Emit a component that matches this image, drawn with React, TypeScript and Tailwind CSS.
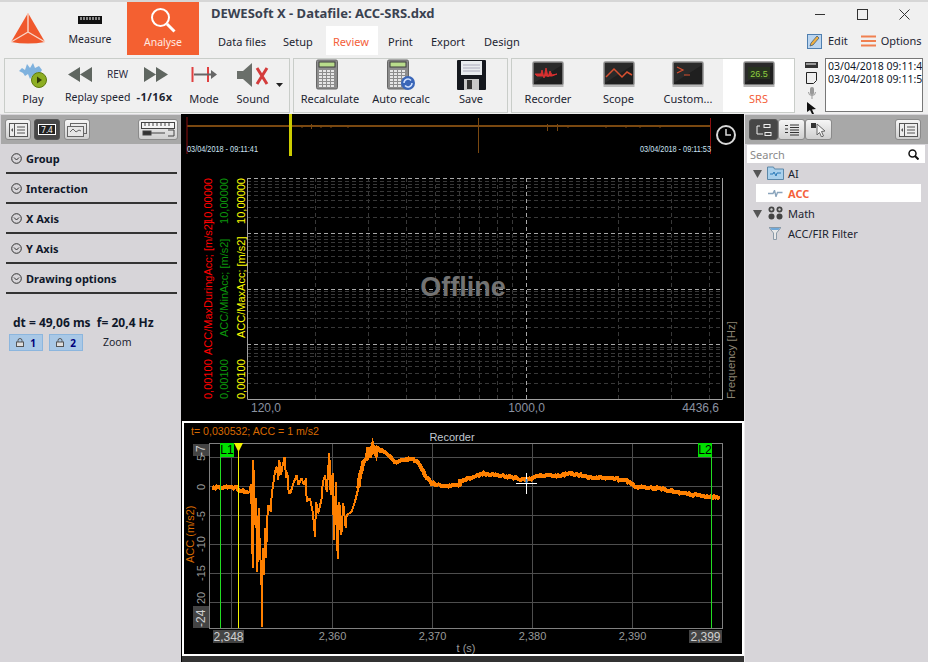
import type { ReactNode } from "react"

const ui = "font-['Noto_Sans',sans-serif]"
const arial = "'Liberation Sans', Arial, sans-serif"

// chart helpers
const z6 = (p: number[][]) => p.map(([x, y]) => [180 + x / 3, 415 + y / 3])
const z7 = (p: number[][]) => p.map(([x, y]) => [460 + x / 3, 415 + y / 3])
const toPts = (p: number[][]) => p.map(([x, y]) => `${x.toFixed(1)},${y.toFixed(1)}`).join(" ")

// adds some noise to a smooth trace so it looks like a measured signal
function noisy(p: number[][], amp: number) {
  const out: number[][] = []
  let seed = 7
  for (let i = 0; i < p.length - 1; i++) {
    const [x0, y0] = p[i]
    const [x1, y1] = p[i + 1]
    const n = Math.max(1, Math.round(Math.abs(x1 - x0) / 1.5))
    for (let k = 0; k < n; k++) {
      seed = (seed * 73 + 41) % 101
      const t = k / n
      out.push([x0 + (x1 - x0) * t, y0 + (y1 - y0) * t + (seed / 101 - 0.5) * amp])
    }
  }
  return out
}

const flatStart = noisy(z6([[96, 218], [120, 217], [170, 218], [175, 228], [210, 230]]), 2)
const spikes = z6([
  [210, 230], [212, 208], [216, 300], [218, 460], [220, 135], [224, 330], [228, 250], [232, 470], [236, 280], [240, 420],
  [244, 460], [246, 636], [248, 400], [252, 480], [256, 340], [258, 430], [262, 310], [265, 270], [272, 290], [275, 240],
  [280, 205], [285, 170], [290, 155], [295, 195], [298, 135], [303, 180], [308, 150], [314, 125], [318, 190], [322, 170],
  [326, 235], [332, 232], [340, 205], [350, 180], [355, 210], [365, 190], [372, 210], [378, 190], [380, 260], [390, 250],
  [398, 290], [405, 365], [408, 260], [415, 295], [425, 250], [428, 205], [435, 180], [440, 230], [448, 115], [452, 240],
  [458, 175], [462, 375], [468, 200], [473, 432], [478, 260], [484, 360], [490, 265], [497, 340], [500, 300], [515, 290],
  [525, 260], [535, 220],
])
const smooth = noisy(
  [
    ...z6([[535, 220], [540, 180], [550, 145], [560, 130], [565, 95], [570, 125], [578, 95], [588, 120], [592, 100], [610, 110],
      [630, 125], [650, 145], [670, 135], [695, 130], [715, 145], [735, 180], [755, 205], [775, 210], [800, 212], [840, 210]]),
    ...z7([[0, 200], [30, 190], [70, 175], [130, 182], [170, 190], [200, 195], [240, 182], [290, 182], [340, 176], [380, 186],
      [450, 190], [500, 197], [530, 215], [600, 220], [650, 232], [700, 240], [750, 245], [775, 250], [782, 258]]),
  ],
  2,
)

const freqX = (f: number) => Math.round(247.3 + 303 * Math.log10(f / 120)) + 0.5
const minorF = [200, 300, 400, 500, 600, 700, 800, 900, 2000, 3000, 4000]
const decades = [399.3, 344.05, 288.8, 233.55]
const minorN = [2, 3, 4, 5, 6, 7, 8, 9]

function Bordered({ children, className }: { children: ReactNode; className: string }) {
  return <div className={`border border-[#c9cdc9] flex ${className}`}>{children}</div>
}

function Tool({ label, icon, w, active }: { label: string; icon: ReactNode; w: string; active?: boolean }) {
  return (
    <div className={`${w} flex flex-col items-center ${active ? "bg-white" : ""}`}>
      <div className="h-[31px] flex items-center justify-center">{icon}</div>
      <div className={`mt-[2px] text-[11px] leading-[14px] ${active ? "text-[#f4603a]" : "text-[#1c2430]"}`}>{label}</div>
    </div>
  )
}

function Calc({ refresh }: { refresh?: boolean }) {
  return (
    <svg width="30" height="31" viewBox="0 0 30 31">
      <rect x="1.5" y="1" width="21" height="29" rx="1.5" fill="#8d8d8d" stroke="#666" />
      <rect x="4" y="3" width="16" height="5" fill="#b9dc8c" stroke="#3c3c3c" />
      {[11, 14, 17, 20, 23, 26].map((y) =>
        [4, 8, 12, 16].map((x) => <rect key={`${x}-${y}`} x={x} y={y} width="3" height="2" fill="#e6e6e6" />),
      )}
      {refresh && (
        <g>
          <circle cx="22" cy="24" r="7" fill="#3a66b8" />
          <path d="M18 24a4 4 0 0 1 7-2.6M26 24a4 4 0 0 1-7 2.6" fill="none" stroke="#cfe0ff" strokeWidth="1.5" />
        </g>
      )}
    </svg>
  )
}

function Screen({ children, bg = "#2a2a2a" }: { children: ReactNode; bg?: string }) {
  return (
    <svg width="32" height="27" viewBox="0 0 32 27">
      <rect x="1" y="1" width="30" height="23" rx="1.5" fill={bg} stroke="#8e8e8e" strokeWidth="1.5" />
      <path d="M2 22 L30 4 V23 H2Z" fill="#111" opacity="0.45" />
      <rect x="0.5" y="24" width="31" height="2" fill="#b9b9b9" />
      {children}
    </svg>
  )
}

function PanelBtn({ children, dark, w = "w-[26px]" }: { children: ReactNode; dark?: boolean; w?: string }) {
  return (
    <div
      className={`${w} h-[21px] rounded-[3px] border flex items-center justify-center ${
        dark ? "bg-[#474747] border-[#555]" : "bg-gradient-to-b from-[#f6f6f6] to-[#cfcfcf] border-[#8a8a8a]"
      }`}
    >
      {children}
    </div>
  )
}

function ListIcon() {
  return (
    <svg width="19" height="14" viewBox="0 0 19 14" fill="none" stroke="#555">
      <rect x="0.5" y="0.5" width="18" height="13" fill="#eee" />
      <path d="M5.5 1v12M8 4h8M8 7h8M8 10h8" />
      <path d="M4 5L2 7l2 2z" fill="#555" stroke="none" />
    </svg>
  )
}

function Section({ title }: { title: string }) {
  return (
    <div className="mx-[6px] w-[171px] h-[30px] border-b-2 border-[#333] flex items-center pl-[5px] gap-[4px]">
      <svg width="11" height="11" viewBox="0 0 11 11" fill="none" stroke="#333">
        <circle cx="5.5" cy="5.5" r="4.8" />
        <path d="M3 4.5l2.5 2.5L8 4.5" />
      </svg>
      <span className="text-[11px] font-bold text-[#10182a] leading-none">{title}</span>
    </div>
  )
}

function LockBtn({ n }: { n: number }) {
  return (
    <div className="w-[34px] h-[17px] bg-[#a9c8e6] border border-[#8cb6de] flex items-center justify-center gap-[6px]">
      <svg width="8" height="9" viewBox="0 0 8 9" fill="none">
        <path d="M2 4V2.5a2 2 0 0 1 4 0V4" stroke="#555" />
        <rect x="0.5" y="4" width="7" height="4.5" fill="#ddd" stroke="#555" />
      </svg>
      <span className="text-[10px] font-bold text-[#00007a] leading-none">{n}</span>
    </div>
  )
}

function TreeRow({ icon, label, active, arrow }: { icon: ReactNode; label: string; active?: boolean; arrow?: boolean }) {
  return (
    <div className="h-[20px] flex items-center">
      <div className="w-[10px] ml-[7px] flex justify-center">
        {arrow && (
          <svg width="9" height="9" viewBox="0 0 9 9">
            <path d="M0 1h9L4.5 9z" fill="#555" />
          </svg>
        )}
      </div>
      <div className={`flex items-center h-[18px] ml-[-6px] pl-[6px] w-[165px] ${active ? "bg-white" : ""}`}>
        <div className="w-[26px] flex justify-center">{icon}</div>
        <span className={`text-[11px] leading-none ${active ? "font-bold text-[#f4603a]" : "text-[#1c2430]"}`}>{label}</span>
      </div>
    </div>
  )
}

export default function App() {
  return (
    <div className={`w-[928px] h-[662px] overflow-hidden flex flex-col bg-[#f0f0f0] ${ui}`}>
      {/* Title bar + ribbon tabs */}
      <div className="h-[57px] border-t-2 border-[#d6d6d6] flex">
        <div className="w-[58px] flex items-start justify-center pt-[10px] pr-[2px]">
          <svg width="36" height="32" viewBox="0 0 36 32">
            <path d="M18 1 L35 30 Q18 33 1 30Z" fill="#f0582c" />
            <path d="M18 1 L18 20 M18 20 L1 30 M18 20 L35 30" stroke="#f9d6c8" strokeWidth="1.4" fill="none" />
          </svg>
        </div>
        <div className="w-[64px] flex flex-col items-center pt-[14px]">
          <svg width="24" height="8" viewBox="0 0 24 8">
            <rect width="24" height="8" fill="#111" />
            <path d="M3 1v3M6 1v3M9 1v3M12 1v3M15 1v3M18 1v3M21 1v3" stroke="#fff" />
          </svg>
          <div className="text-[10.5px] leading-[14px] mt-[8px] text-[#1c2430]">Measure</div>
        </div>
        <div className="ml-[5px] w-[72px] h-[53px] bg-[#f46031] flex flex-col items-center pt-[5px]">
          <svg width="26" height="26" viewBox="0 0 26 26" fill="none" stroke="#fff" strokeWidth="2">
            <circle cx="10.5" cy="10.5" r="8.5" />
            <path d="M17 17l7.5 7.5" strokeWidth="3" />
          </svg>
          <div className="text-[10.5px] leading-[14px] mt-[2px] text-[#ffe9e0]">Analyse</div>
        </div>
        <div className="ml-[12px] flex flex-col">
          <div className="h-[22px] text-[13px] font-bold text-[#3a4250] leading-[22px]">DEWESoft X - Datafile: ACC-SRS.dxd</div>
          <div className="flex text-[11px] text-[#1c2430] h-[29px] mt-[2px] leading-[32px]">
            <div className="w-[65px] pl-[7px]">Data files</div>
            <div className="w-[50px] pl-[7px]">Setup</div>
            <div className="w-[52px] pl-[7px] bg-white text-[#f4603a]">Review</div>
            <div className="w-[46px] pl-[10px]">Print</div>
            <div className="w-[60px] pl-[7px]">Export</div>
            <div>Design</div>
          </div>
        </div>
        <div className="ml-auto flex flex-col w-[121px]">
          <div className="h-[26px] flex items-start pt-[7px] pl-[8px] gap-[31px]">
            <svg width="11" height="11" viewBox="0 0 11 11" fill="none" stroke="#333"><path d="M0 5.5h10" /></svg>
            <svg width="11" height="11" viewBox="0 0 11 11" fill="none" stroke="#333"><rect x="0.5" y="0.5" width="10" height="10" /></svg>
            <svg width="11" height="11" viewBox="0 0 11 11" fill="none" stroke="#333"><path d="M0.5 0.5l10 10M10.5 0.5l-10 10" /></svg>
          </div>
          <div className="h-[20px] mt-[3px] flex items-center text-[11px] text-[#1c2430]">
            <svg width="15" height="15" viewBox="0 0 15 15" className="shrink-0">
              <rect x="0.5" y="0.5" width="14" height="14" fill="#bcd6f0" stroke="#4f7fb0" />
              <path d="M3 12l1-3 6-7 2 2-6 7z" fill="#f0b040" stroke="#35506e" strokeWidth="0.7" />
            </svg>
            <span className="ml-[6px]">Edit</span>
            <svg width="15" height="12" viewBox="0 0 15 12" className="ml-[13px] shrink-0">
              <path d="M0 1.5h15M0 6h15M0 10.5h15" stroke="#f08050" strokeWidth="2" />
            </svg>
            <span className="ml-[5px]">Options</span>
          </div>
        </div>
      </div>

      {/* Review toolbar */}
      <div className="h-[57px] flex pl-[4px] pt-[1px]">
        <Bordered className="w-[286px] h-[55px]">
          <Tool
            w="w-[56px]"
            label="Play"
            icon={
              <svg width="30" height="28" viewBox="0 0 30 28">
                <path d="M1 10l3-3 3 2 2-6 3 4 3-5 2 5 4-2 3 4-2 3-3-1-1 5-3-2-3 4-2-5-3 2-2-3z" fill="#7fb2de" />
                <circle cx="21" cy="19" r="7.5" fill="#8dae22" stroke="#5e7a10" />
                <path d="M19 15.5l5 3.5-5 3.5z" fill="#2f3a08" />
              </svg>
            }
          />
          <div className="w-[116px] flex flex-col">
            <div className="h-[30px] flex items-center pl-[7px]">
              <svg width="24" height="15" viewBox="0 0 24 15"><path d="M12 0v15L0 7.5zM24 0v15L12 7.5z" fill="#5f6660" /></svg>
              <span className="ml-[15px] text-[10px] text-[#2a2a40] w-[37px]">REW</span>
              <svg width="24" height="15" viewBox="0 0 24 15"><path d="M0 0v15l12-7.5zM12 0v15l12-7.5z" fill="#5f6660" /></svg>
            </div>
            <div className="mt-[1px] pl-[4px] flex items-center text-[10.5px] leading-[14px] text-[#1c2430] whitespace-nowrap">
              <span>Replay speed</span>
              <span className="ml-[6px] font-bold text-[11px] tracking-[0.5px]">-1/16x</span>
            </div>
          </div>
          <Tool
            w="w-[54px]"
            label="Mode"
            icon={
              <svg width="27" height="15" viewBox="0 0 27 15">
                <path d="M1.5 0v15M17 0v15" stroke="#e04040" strokeWidth="2" />
                <path d="M3 7.5h20" stroke="#666" strokeWidth="2" />
                <path d="M20 3l6 4.5-6 4.5z" fill="#666" />
              </svg>
            }
          />
          <Tool
            w="w-[44px]"
            label="Sound"
            icon={
              <svg width="33" height="24" viewBox="0 0 33 24">
                <path d="M0 8h6l9-8v24l-9-8H0z" fill="#6a6f6a" />
                <path d="M20 5l10 16M30 5L20 21" stroke="#d43c3c" strokeWidth="3" />
              </svg>
            }
          />
          <div className="ml-[1px] mt-[24px]">
            <svg width="7" height="4" viewBox="0 0 7 4"><path d="M0 0h7L3.5 4z" fill="#222" /></svg>
          </div>
        </Bordered>
        <Bordered className="w-[215px] h-[55px] ml-[3px]">
          <Tool w="w-[72px]" label="Recalculate" icon={<Calc />} />
          <Tool w="w-[70px]" label="Auto recalc" icon={<Calc refresh />} />
          <Tool
            w="w-[70px]"
            label="Save"
            icon={
              <svg width="29" height="30" viewBox="0 0 29 30">
                <path d="M1 0h27a1 1 0 0 1 1 1v28a1 1 0 0 1-1 1H1a1 1 0 0 1-1-1V1a1 1 0 0 1 1-1z" fill="#15181e" />
                <rect x="4" y="1" width="21" height="14" fill="#e8ebee" />
                <path d="M6 5h17M6 8h17M6 11h17" stroke="#aab" />
                <rect x="7" y="19" width="15" height="11" fill="#c8c8c8" />
                <rect x="10" y="20" width="5" height="9" fill="#333" />
              </svg>
            }
          />
        </Bordered>
        <Bordered className="w-[284px] h-[55px] ml-[3px]">
          <Tool
            w="w-[72px]"
            label="Recorder"
            icon={
              <Screen>
                <path d="M3 13h6l1-4 2 8 2-10 2 9 2-6 2 4 5-1-5 2h-15z" fill="#d83030" stroke="#d83030" />
              </Screen>
            }
          />
          <Tool
            w="w-[69px]"
            label="Scope"
            icon={
              <Screen>
                <path d="M3 16l8-8 8 8 5-5 5 3" fill="none" stroke="#d85030" strokeWidth="1.5" />
              </Screen>
            }
          />
          <Tool
            w="w-[70px]"
            label="Custom..."
            icon={
              <Screen>
                <path d="M5 6l6 3-6 3M12 14h6" fill="none" stroke="#d85030" strokeWidth="1.2" />
              </Screen>
            }
          />
          <Tool
            w="w-[71px]"
            active
            label="SRS"
            icon={
              <Screen>
                <rect x="5" y="6" width="22" height="12" fill="#27331f" />
                <text x="16" y="15.5" textAnchor="middle" fontSize="9" fontFamily={arial} fill="#8fd040">26.5</text>
              </Screen>
            }
          />
        </Bordered>
        <div className="w-[13px] ml-[10px] flex flex-col items-center gap-[3px] pt-[4px]">
          <svg width="13" height="7" viewBox="0 0 13 7"><rect width="13" height="6" fill="#333" /><path d="M2 1v2M4 1v2M6 1v2M8 1v2M10 1v2" stroke="#fff" /></svg>
          <svg width="11" height="12" viewBox="0 0 11 12"><path d="M0.5 0.5h10v8l-3 3h-7z" fill="#eee" stroke="#222" /></svg>
          <svg width="8" height="12" viewBox="0 0 8 12" fill="none"><rect x="2" y="0" width="4" height="8" rx="2" fill="#999" /><path d="M0.5 5a3.5 3.5 0 0 0 7 0M4 9v3" stroke="#999" /></svg>
          <svg width="9" height="12" viewBox="0 0 9 12"><path d="M0 0l9 7-4 .5L7 12l-2 0-2-4-3 2z" fill="#111" /></svg>
        </div>
        <div className="w-[98px] h-[54px] ml-[7px] bg-white border border-[#777] overflow-hidden pl-[2px] pt-[1px] text-[10.5px] leading-[13px] text-[#10182a] whitespace-nowrap">
          <div>03/04/2018 09:11:41</div>
          <div>03/04/2018 09:11:53</div>
        </div>
      </div>

      {/* Main */}
      <div className="flex-1 flex min-h-0">
        <div className="w-[181px] bg-[#d7d5d9] flex flex-col">
          <div className="h-[29px] mt-[1px] bg-[#a8a8a8] ml-[1px] flex items-center pl-[4px]">
            <PanelBtn><ListIcon /></PanelBtn>
            <div className="ml-[3px]">
              <PanelBtn dark>
                <div className="w-[18px] h-[11px] bg-[#222] border border-white text-white text-[8px] leading-[9px] text-center">7.4</div>
              </PanelBtn>
            </div>
            <div className="ml-[4px]">
              <PanelBtn>
                <svg width="20" height="14" viewBox="0 0 20 14" fill="none" stroke="#666">
                  <rect x="3.5" y="0.5" width="16" height="10" />
                  <rect x="0.5" y="3.5" width="16" height="10" fill="#e6e6e6" />
                  <path d="M3 9l3-3 3 3 3-2 2 1" />
                </svg>
              </PanelBtn>
            </div>
            <div className="ml-[48px]">
              <PanelBtn w="w-[40px]">
                <svg width="34" height="15" viewBox="0 0 34 15" fill="none" stroke="#444">
                  <rect x="0.5" y="0.5" width="33" height="6" fill="#f4f4f4" />
                  <path d="M4 1v3M8 1v3M12 1v3M16 1v3M20 1v3M24 1v3M28 1v3" />
                  <rect x="2" y="9" width="8" height="4" fill="#333" />
                  <path d="M10 11h14" />
                  <path d="M27 8h6v6h-6" />
                </svg>
              </PanelBtn>
            </div>
          </div>
          <Section title="Group" />
          <Section title="Interaction" />
          <Section title="X Axis" />
          <Section title="Y Axis" />
          <Section title="Drawing options" />
          <div className="mt-[21px] ml-[13px] text-[12px] font-bold text-[#10182a] leading-[16px] whitespace-nowrap">dt = 49,06 ms&nbsp; f= 20,4 Hz</div>
          <div className="mt-[3px] ml-[9px] flex gap-[6px] items-center">
            <LockBtn n={1} />
            <LockBtn n={2} />
            <span className="ml-[14px] text-[10.5px] text-[#1c2430]">Zoom</span>
          </div>
        </div>

        <div className="w-[563px] bg-black flex flex-col">
          {/* Overview strip */}
          <svg width="563" height="46" viewBox="181 114 563 46" className="block shrink-0">
            <path d="M187 126H710" stroke="#7a4810" strokeWidth="2" />
            <path d="M187 117V154M710.5 118V154" stroke="#8c0f0f" />
            <path d="M478.5 118V153M311.5 124V129M547.5 124V131M557.5 124V131" stroke="#7a4810" />
            <path d="M302 126v2M321 126v2M331 126v2M348 126v2M568 126v2M606 126v2M626 126v2M640 126v2M660 126v2" stroke="#7a4810" />
            <rect x="289" y="114" width="3" height="42" fill="#cccc00" />
            <text x="187" y="152" fontSize="9" fontFamily={arial} fill="#cfe4f4" textLength={71} lengthAdjust="spacingAndGlyphs">03/04/2018 - 09:11:41</text>
            <text x="640" y="152" fontSize="9" fontFamily={arial} fill="#cfe4f4" textLength={71} lengthAdjust="spacingAndGlyphs">03/04/2018 - 09:11:53</text>
            <circle cx="726" cy="135" r="9" fill="none" stroke="#d8d8d8" strokeWidth="2" />
            <path d="M726 129v6h5" fill="none" stroke="#d8d8d8" strokeWidth="1.5" />
          </svg>

          {/* SRS plot */}
          <svg width="563" height="261" viewBox="181 160 563 261" className="block shrink-0">
            <g stroke="#383838" strokeDasharray="4 3" fill="none">
              {minorF.map((f) => (
                <path key={f} d={`M${freqX(f)} 178V399`} />
              ))}
              {decades.map((y) =>
                minorN.map((n) => {
                  const yy = Math.round(y - 55.25 * Math.log10(n)) + 0.5
                  return <path key={`${y}-${n}`} d={`M247 ${yy}H722`} />
                }),
              )}
            </g>
            <g stroke="#a8a8a8" strokeDasharray="4 3" fill="none">
              <path d="M247 178.5H722M247 233.5H722M247 289.5H722M247 344.5H722M526.5 178V399" />
            </g>
            <path d="M247.5 178V399.5H722.5V178" fill="none" stroke="#a0a0a0" />
            <text x="463" y="296" textAnchor="middle" fontSize="27" fontWeight="bold" fontFamily={arial} fill="#737373">Offline</text>
            {[
              { x: 212, c: "#ff0000", a: "0,00100", b: "ACC/MaxDuringAcc; [m/s2]", by: 355, ty: 178 },
              { x: 228, c: "#0c960c", a: "0,00100", b: "ACC/MinAcc; [m/s2]", by: 337, ty: 178 },
              { x: 245, c: "#ffff00", a: "0,00100", b: "ACC/MaxAcc; [m/s2]", by: 338, ty: 178 },
            ].map((l) => (
              <g key={l.b} fill={l.c} fontSize="11" fontFamily={arial}>
                <text transform={`translate(${l.x} 399) rotate(-90)`}>{l.a}</text>
                <text transform={`translate(${l.x} ${l.by}) rotate(-90)`}>{l.b}</text>
                <text transform={`translate(${l.x} ${l.ty}) rotate(-90)`} textAnchor="end">10,00000</text>
              </g>
            ))}
            <g fontSize="12" fontFamily={arial} fill="#8b92a0">
              <text x="251" y="412">120,0</text>
              <text x="526.5" y="412" textAnchor="middle">1000,0</text>
              <text x="719" y="412" textAnchor="end">4436,6</text>
            </g>
            <text transform="translate(735 399) rotate(-90)" fontSize="11.5" fontFamily={arial} fill="#8a8272">Frequency [Hz]</text>
          </svg>

          {/* Recorder plot */}
          <div className="w-[562px] ml-[1px] h-[235px] border-2 border-white shrink-0">
            <svg width="558" height="231" viewBox="184 423 558 231" className="block">
              <text x="191" y="435" fontSize="11" fontFamily={arial} fill="#d86a00" textLength={128} lengthAdjust="spacingAndGlyphs">t= 0,030532; ACC = 1 m/s2</text>
              <text x="452" y="441" textAnchor="middle" fontSize="11" fontFamily={arial} fill="#c0c8d0">Recorder</text>
              <path d="M209 457.5H722M209 486.5H722M209 515.5H722M209 544.5H722M209 573.5H722M209 602.5H722" stroke="#4e4e4e" />
              <path d="M231.5 443V628M332.5 443V628M432.5 443V628M532.5 443V628M632.5 443V628" stroke="#4e4e4e" />
              <rect x="209.5" y="443.5" width="513" height="185" fill="none" stroke="#808080" />
              <polyline points={toPts(flatStart)} fill="none" stroke="#ff8000" strokeWidth="4" shapeRendering="crispEdges" />
              <polyline points={toPts(spikes)} fill="none" stroke="#ff8000" strokeWidth="2" strokeLinejoin="bevel" shapeRendering="crispEdges" />
              <polyline points={toPts(smooth)} fill="none" stroke="#ff8000" strokeWidth="4" shapeRendering="crispEdges" />
              <path d="M220.5 443V628M711.5 443V628" stroke="#22dd22" />
              <path d="M238.5 443V628" stroke="#f4f400" />
              <rect x="220" y="443" width="14" height="14" fill="#00e000" />
              <text x="227" y="454" textAnchor="middle" fontSize="12" fontFamily={arial} fill="#000">L1</text>
              <rect x="698" y="443" width="14" height="14" fill="#00e000" />
              <text x="705" y="454" textAnchor="middle" fontSize="12" fontFamily={arial} fill="#000">L2</text>
              <path d="M234 443h9l-4.5 9z" fill="#f4f400" />
              <path d="M526.5 473V494M516 483.5H537" stroke="#fff" />
              <rect x="525.5" y="479" width="2" height="4" fill="#3a8fe0" />
              <rect x="193" y="444" width="16" height="12" fill="#444" />
              <rect x="193" y="606" width="16" height="22" fill="#444" />
              <g fontSize="11" fontFamily={arial} fill="#9a9a9a">
                <text transform="translate(205 490) rotate(-90)">0</text>
                <text transform="translate(205 521) rotate(-90)">-5</text>
                <text transform="translate(205 552) rotate(-90)">-10</text>
                <text transform="translate(205 581) rotate(-90)">-15</text>
                <text transform="translate(205 604) rotate(-90)">20</text>
                <text transform="translate(205 461) rotate(-90)">5</text>
              </g>
              <text transform="translate(205 456) rotate(-90)" fontSize="12" fontFamily={arial} fill="#d0d0d0">-7</text>
              <text transform="translate(205 627) rotate(-90)" fontSize="12" fontFamily={arial} fill="#d0d0d0">-24</text>
              <text transform="translate(194 563) rotate(-90)" fontSize="11" fontFamily={arial} fill="#d86a00">ACC (m/s2)</text>
              <rect x="213" y="630" width="31" height="13" fill="#444" />
              <rect x="689" y="630" width="33" height="13" fill="#444" />
              <g fontSize="11" fontFamily={arial} fill="#9a9a9a" textAnchor="middle">
                <text x="332.5" y="640">2,360</text>
                <text x="432.5" y="640">2,370</text>
                <text x="532.5" y="640">2,380</text>
                <text x="632.5" y="640">2,390</text>
                <text x="466" y="652">t (s)</text>
              </g>
              <g fontSize="12" fontFamily={arial} fill="#d0d0d0" textAnchor="middle">
                <text x="228.5" y="641">2,348</text>
                <text x="705.5" y="641">2,399</text>
              </g>
            </svg>
          </div>
          <div className="flex-1 ml-[1px] bg-[#333]" />
        </div>

        <div className="flex-1 bg-[#d7d5d9] border-l border-[#ecebed] flex flex-col">
          <div className="h-[29px] mt-[1px] bg-[#a8a8a8] flex items-center pl-[4px]">
            <PanelBtn dark w="w-[29px]">
              <svg width="20" height="14" viewBox="0 0 20 14" fill="none" stroke="#eee">
                <path d="M3 3h3M3 3v8h6" />
                <rect x="10" y="1.5" width="6" height="3" />
                <rect x="11" y="9.5" width="6" height="3" />
              </svg>
            </PanelBtn>
            <PanelBtn w="w-[27px]">
              <svg width="14" height="12" viewBox="0 0 14 12" stroke="#333">
                <path d="M0 1.5h3M0 5h3M0 8.5h3M5 1h9M5 3.5h9M5 6h9M5 8.5h9M5 11h9" fill="none" />
              </svg>
            </PanelBtn>
            <PanelBtn w="w-[27px]">
              <svg width="18" height="15" viewBox="0 0 18 15">
                <rect x="1" y="1" width="5" height="5" fill="#333" />
                <path d="M7 2l8 7-3.5.5 2 4.5-2 1-2-4.5L7 13z" fill="#f4f4f4" stroke="#666" />
              </svg>
            </PanelBtn>
            <div className="ml-[63px]">
              <PanelBtn><ListIcon /></PanelBtn>
            </div>
          </div>
          <div className="h-[18px] mt-[1px] mx-[2px] w-[178px] bg-white flex items-center justify-between pl-[3px] pr-[6px]">
            <span className="text-[11px] text-[#8a8a8a] leading-none">Search</span>
            <svg width="11" height="11" viewBox="0 0 11 11" fill="none" stroke="#111" strokeWidth="1.5">
              <circle cx="4.5" cy="4.5" r="3.5" />
              <path d="M7 7l3.5 3.5" strokeWidth="2" />
            </svg>
          </div>
          <div>
            <TreeRow
              arrow
              label="AI"
              icon={
                <svg width="17" height="14" viewBox="0 0 17 14">
                  <path d="M0.5 1h6l1 2h9v10.5H0.5z" fill="#a9d0ec" stroke="#5b87a8" />
                  <path d="M3 8h3l1-2 2 4 1-3h4" fill="none" stroke="#2a7ab8" />
                </svg>
              }
            />
            <TreeRow
              active
              label="ACC"
              icon={
                <svg width="15" height="7" viewBox="0 0 15 7"><path d="M0 3.5h5l1.5-3 1.5 6 1.5-4h5" fill="none" stroke="#8aa4bc" strokeWidth="1.4" /></svg>
              }
            />
            <TreeRow
              arrow
              label="Math"
              icon={
                <svg width="15" height="14" viewBox="0 0 15 14" fill="#444">
                  <circle cx="3.5" cy="3.5" r="3" />
                  <circle cx="11.5" cy="3.5" r="3" />
                  <circle cx="3.5" cy="10.5" r="3" />
                  <circle cx="11.5" cy="10.5" r="3" />
                  <circle cx="3.5" cy="3.5" r="1.2" fill="#ccc" />
                  <circle cx="11.5" cy="3.5" r="1.2" fill="#ccc" />
                </svg>
              }
            />
            <TreeRow
              label="ACC/FIR Filter"
              icon={
                <svg width="12" height="13" viewBox="0 0 12 13">
                  <path d="M0 0.5h12L7.5 6v6.5h-3V6z" fill="#e8e8e8" stroke="#8a9aa8" />
                  <path d="M1 1h10l-1.5 2h-7z" fill="#6fa8d8" />
                </svg>
              }
            />
          </div>
        </div>
      </div>
    </div>
  )
}
